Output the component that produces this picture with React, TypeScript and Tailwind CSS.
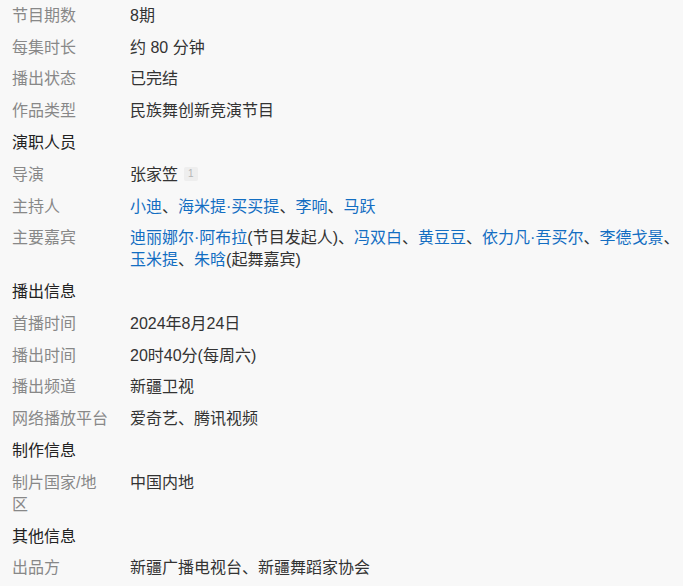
import React from 'react';

type Part = { text: string; link?: boolean };

type Row =
  | { kind: 'section'; title: string }
  | { kind: 'item'; label: string; value: Part[]; note?: string };

const plain = (text: string): Part[] => [{ text }];

const names = (list: string[], tail?: Record<number, string>): Part[] => {
  const parts: Part[] = [];
  list.forEach((n, i) => {
    parts.push({ text: n, link: true });
    if (tail && tail[i]) parts.push({ text: tail[i] });
    if (i < list.length - 1) parts.push({ text: '、' });
  });
  return parts;
};

const rows: Row[] = [
  { kind: 'item', label: '节目期数', value: plain('8期') },
  { kind: 'item', label: '每集时长', value: plain('约 80 分钟') },
  { kind: 'item', label: '播出状态', value: plain('已完结') },
  { kind: 'item', label: '作品类型', value: plain('民族舞创新竞演节目') },
  { kind: 'section', title: '演职人员' },
  { kind: 'item', label: '导演', value: plain('张家笠'), note: '1' },
  { kind: 'item', label: '主持人', value: names(['小迪', '海米提·买买提', '李响', '马跃']) },
  {
    kind: 'item',
    label: '主要嘉宾',
    value: names(
      ['迪丽娜尔·阿布拉', '冯双白', '黄豆豆', '依力凡·吾买尔', '李德戈景', '玉米提', '朱晗'],
      { 0: '(节目发起人)', 6: '(起舞嘉宾)' }
    ),
  },
  { kind: 'section', title: '播出信息' },
  { kind: 'item', label: '首播时间', value: plain('2024年8月24日') },
  { kind: 'item', label: '播出时间', value: plain('20时40分(每周六)') },
  { kind: 'item', label: '播出频道', value: plain('新疆卫视') },
  { kind: 'item', label: '网络播放平台', value: plain('爱奇艺、腾讯视频') },
  { kind: 'section', title: '制作信息' },
  { kind: 'item', label: '制片国家/地区', value: plain('中国内地') },
  { kind: 'section', title: '其他信息' },
  { kind: 'item', label: '出品方', value: plain('新疆广播电视台、新疆舞蹈家协会') },
];

const App: React.FC = () => {
  return (
    <div className="h-[586px] overflow-hidden bg-[#f8f8f8]">
      <div
        className="pl-3 text-[16px] leading-[22px] text-[#333]"
        style={{ fontFamily: '"Liberation Sans", "Noto Sans CJK SC", sans-serif' }}
      >
        {rows.map((row, i) =>
          row.kind === 'section' ? (
            <div key={i} className="py-[4.9px] text-[#222]">{row.title}</div>
          ) : (
            <div key={i} className="flex py-[4.9px]">
              <div className="w-[96px] shrink-0 break-all text-[#888]">{row.label}</div>
              <div className="ml-[22px] flex-1">
                {row.value.map((p, j) =>
                  p.link ? (
                    <span key={j} className="text-[#136ec2]">{p.text}</span>
                  ) : (
                    <span key={j}>{p.text}</span>
                  )
                )}
                {row.note && (
                  <sup className="relative -top-[3px] ml-[6px] inline-block rounded-[2px] bg-[#eeeeee] px-[4px] text-[10px] leading-[14px] text-[#b5b5b5]">
                    {row.note}
                  </sup>
                )}
              </div>
            </div>
          )
        )}
      </div>
    </div>
  );
};

export default App;
